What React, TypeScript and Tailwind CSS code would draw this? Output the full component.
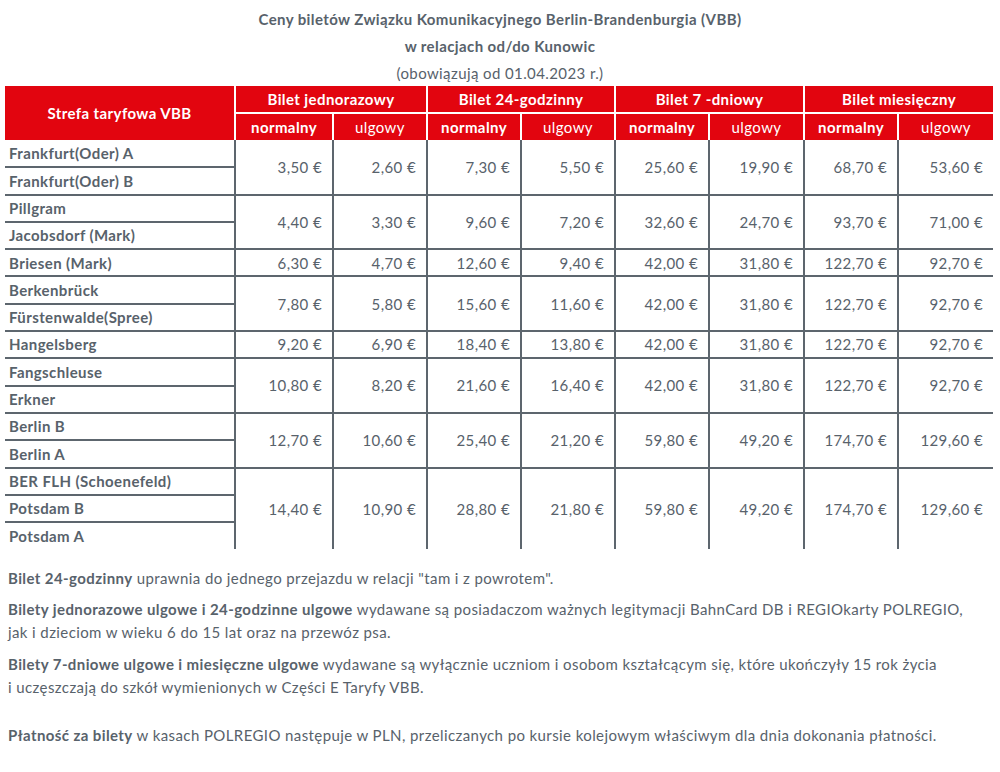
const GROUPS: { names: string[]; prices: string[] }[] = [
  { names: ["Frankfurt(Oder) A", "Frankfurt(Oder) B"], prices: ["3,50", "2,60", "7,30", "5,50", "25,60", "19,90", "68,70", "53,60"] },
  { names: ["Pillgram", "Jacobsdorf (Mark)"], prices: ["4,40", "3,30", "9,60", "7,20", "32,60", "24,70", "93,70", "71,00"] },
  { names: ["Briesen (Mark)"], prices: ["6,30", "4,70", "12,60", "9,40", "42,00", "31,80", "122,70", "92,70"] },
  { names: ["Berkenbrück", "Fürstenwalde(Spree)"], prices: ["7,80", "5,80", "15,60", "11,60", "42,00", "31,80", "122,70", "92,70"] },
  { names: ["Hangelsberg"], prices: ["9,20", "6,90", "18,40", "13,80", "42,00", "31,80", "122,70", "92,70"] },
  { names: ["Fangschleuse", "Erkner"], prices: ["10,80", "8,20", "21,60", "16,40", "42,00", "31,80", "122,70", "92,70"] },
  { names: ["Berlin B", "Berlin A"], prices: ["12,70", "10,60", "25,40", "21,20", "59,80", "49,20", "174,70", "129,60"] },
  { names: ["BER FLH (Schoenefeld)", "Potsdam B", "Potsdam A"], prices: ["14,40", "10,90", "28,80", "21,80", "59,80", "49,20", "174,70", "129,60"] },
];

const TICKETS = ["Bilet jednorazowy", "Bilet 24-godzinny", "Bilet 7 -dniowy", "Bilet miesięczny"];
const WIDTHS = [230, 98, 94, 94, 94, 94, 95, 94, 95];

export default function App() {
  return (
    <div className="w-[1000px] h-[772px] bg-white text-[#58626b] font-['Lato','Open_Sans',sans-serif] text-[15px] tracking-[0.4px] overflow-hidden">
      <div className="pt-[6px] text-center font-bold leading-[27px]">
        <div>Ceny biletów Związku Komunikacyjnego Berlin-Brandenburgia (VBB)</div>
        <div>w relacjach od/do Kunowic</div>
      </div>
      <div className="text-center leading-[27px]">(obowiązują od 01.04.2023 r.)</div>

      <table className="ml-[5px] mt-[-1px] w-[988px] table-fixed border-collapse">
        <colgroup>
          {WIDTHS.map((w, i) => (
            <col key={i} style={{ width: w }} />
          ))}
        </colgroup>
        <thead className="bg-[#e2050f] text-white">
          <tr className="h-[27px]">
            <th rowSpan={2} className="font-bold border-r-2 border-white">
              Strefa taryfowa VBB
            </th>
            {TICKETS.map((t, i) => (
              <th
                key={t}
                colSpan={2}
                className={`font-bold border-b-2 border-white ${i < 3 ? "border-r-2" : ""}`}
              >
                {t}
              </th>
            ))}
          </tr>
          <tr className="h-[27px]">
            {TICKETS.flatMap((t, i) => [
              <th key={t + "n"} className="font-bold border-r-2 border-white">
                normalny
              </th>,
              <th key={t + "u"} className={`font-normal border-white ${i < 3 ? "border-r-2" : ""}`}>
                ulgowy
              </th>,
            ])}
          </tr>
        </thead>
        <tbody>
          {GROUPS.map((g, gi) =>
            g.names.map((name, ni) => (
              <tr key={name} className="h-[27.3px]">
                <td
                  className={`pl-[4px] font-bold whitespace-nowrap border-r-2 border-[#5d666e] ${
                    ni < g.names.length - 1 || gi < GROUPS.length - 1 ? "border-b-2" : ""
                  }`}
                >
                  {name}
                </td>
                {ni === 0 &&
                  g.prices.map((p, pi) => (
                    <td
                      key={pi}
                      rowSpan={g.names.length}
                      className={`pr-[10px] text-right border-[#5d666e] ${pi < 7 ? "border-r-2" : ""} ${
                        gi < GROUPS.length - 1 ? "border-b-2" : ""
                      }`}
                    >
                      {p} €
                    </td>
                  ))}
              </tr>
            ))
          )}
        </tbody>
      </table>

      <div className="pl-[8px] pt-[18px] leading-[23px]">
        <p>
          <b>Bilet 24-godzinny</b> uprawnia do jednego przejazdu w relacji "tam i z powrotem".
        </p>
        <p className="mt-[8px]">
          <b>Bilety jednorazowe ulgowe i 24-godzinne ulgowe</b> wydawane są posiadaczom ważnych legitymacji BahnCard DB i REGIOkarty POLREGIO,
          <br />
          jak i dzieciom w wieku 6 do 15 lat oraz na przewóz psa.
        </p>
        <p className="mt-[9px]">
          <b>Bilety 7-dniowe ulgowe i miesięczne ulgowe</b> wydawane są wyłącznie uczniom i osobom kształcącym się, które ukończyły 15 rok życia
          <br />
          i uczęszczają do szkół wymienionych w Części E Taryfy VBB.
        </p>
        <p className="mt-[25px]">
          <b>Płatność za bilety</b> w kasach POLREGIO następuje w PLN, przeliczanych po kursie kolejowym właściwym dla dnia dokonania płatności.
        </p>
      </div>
    </div>
  );
}
